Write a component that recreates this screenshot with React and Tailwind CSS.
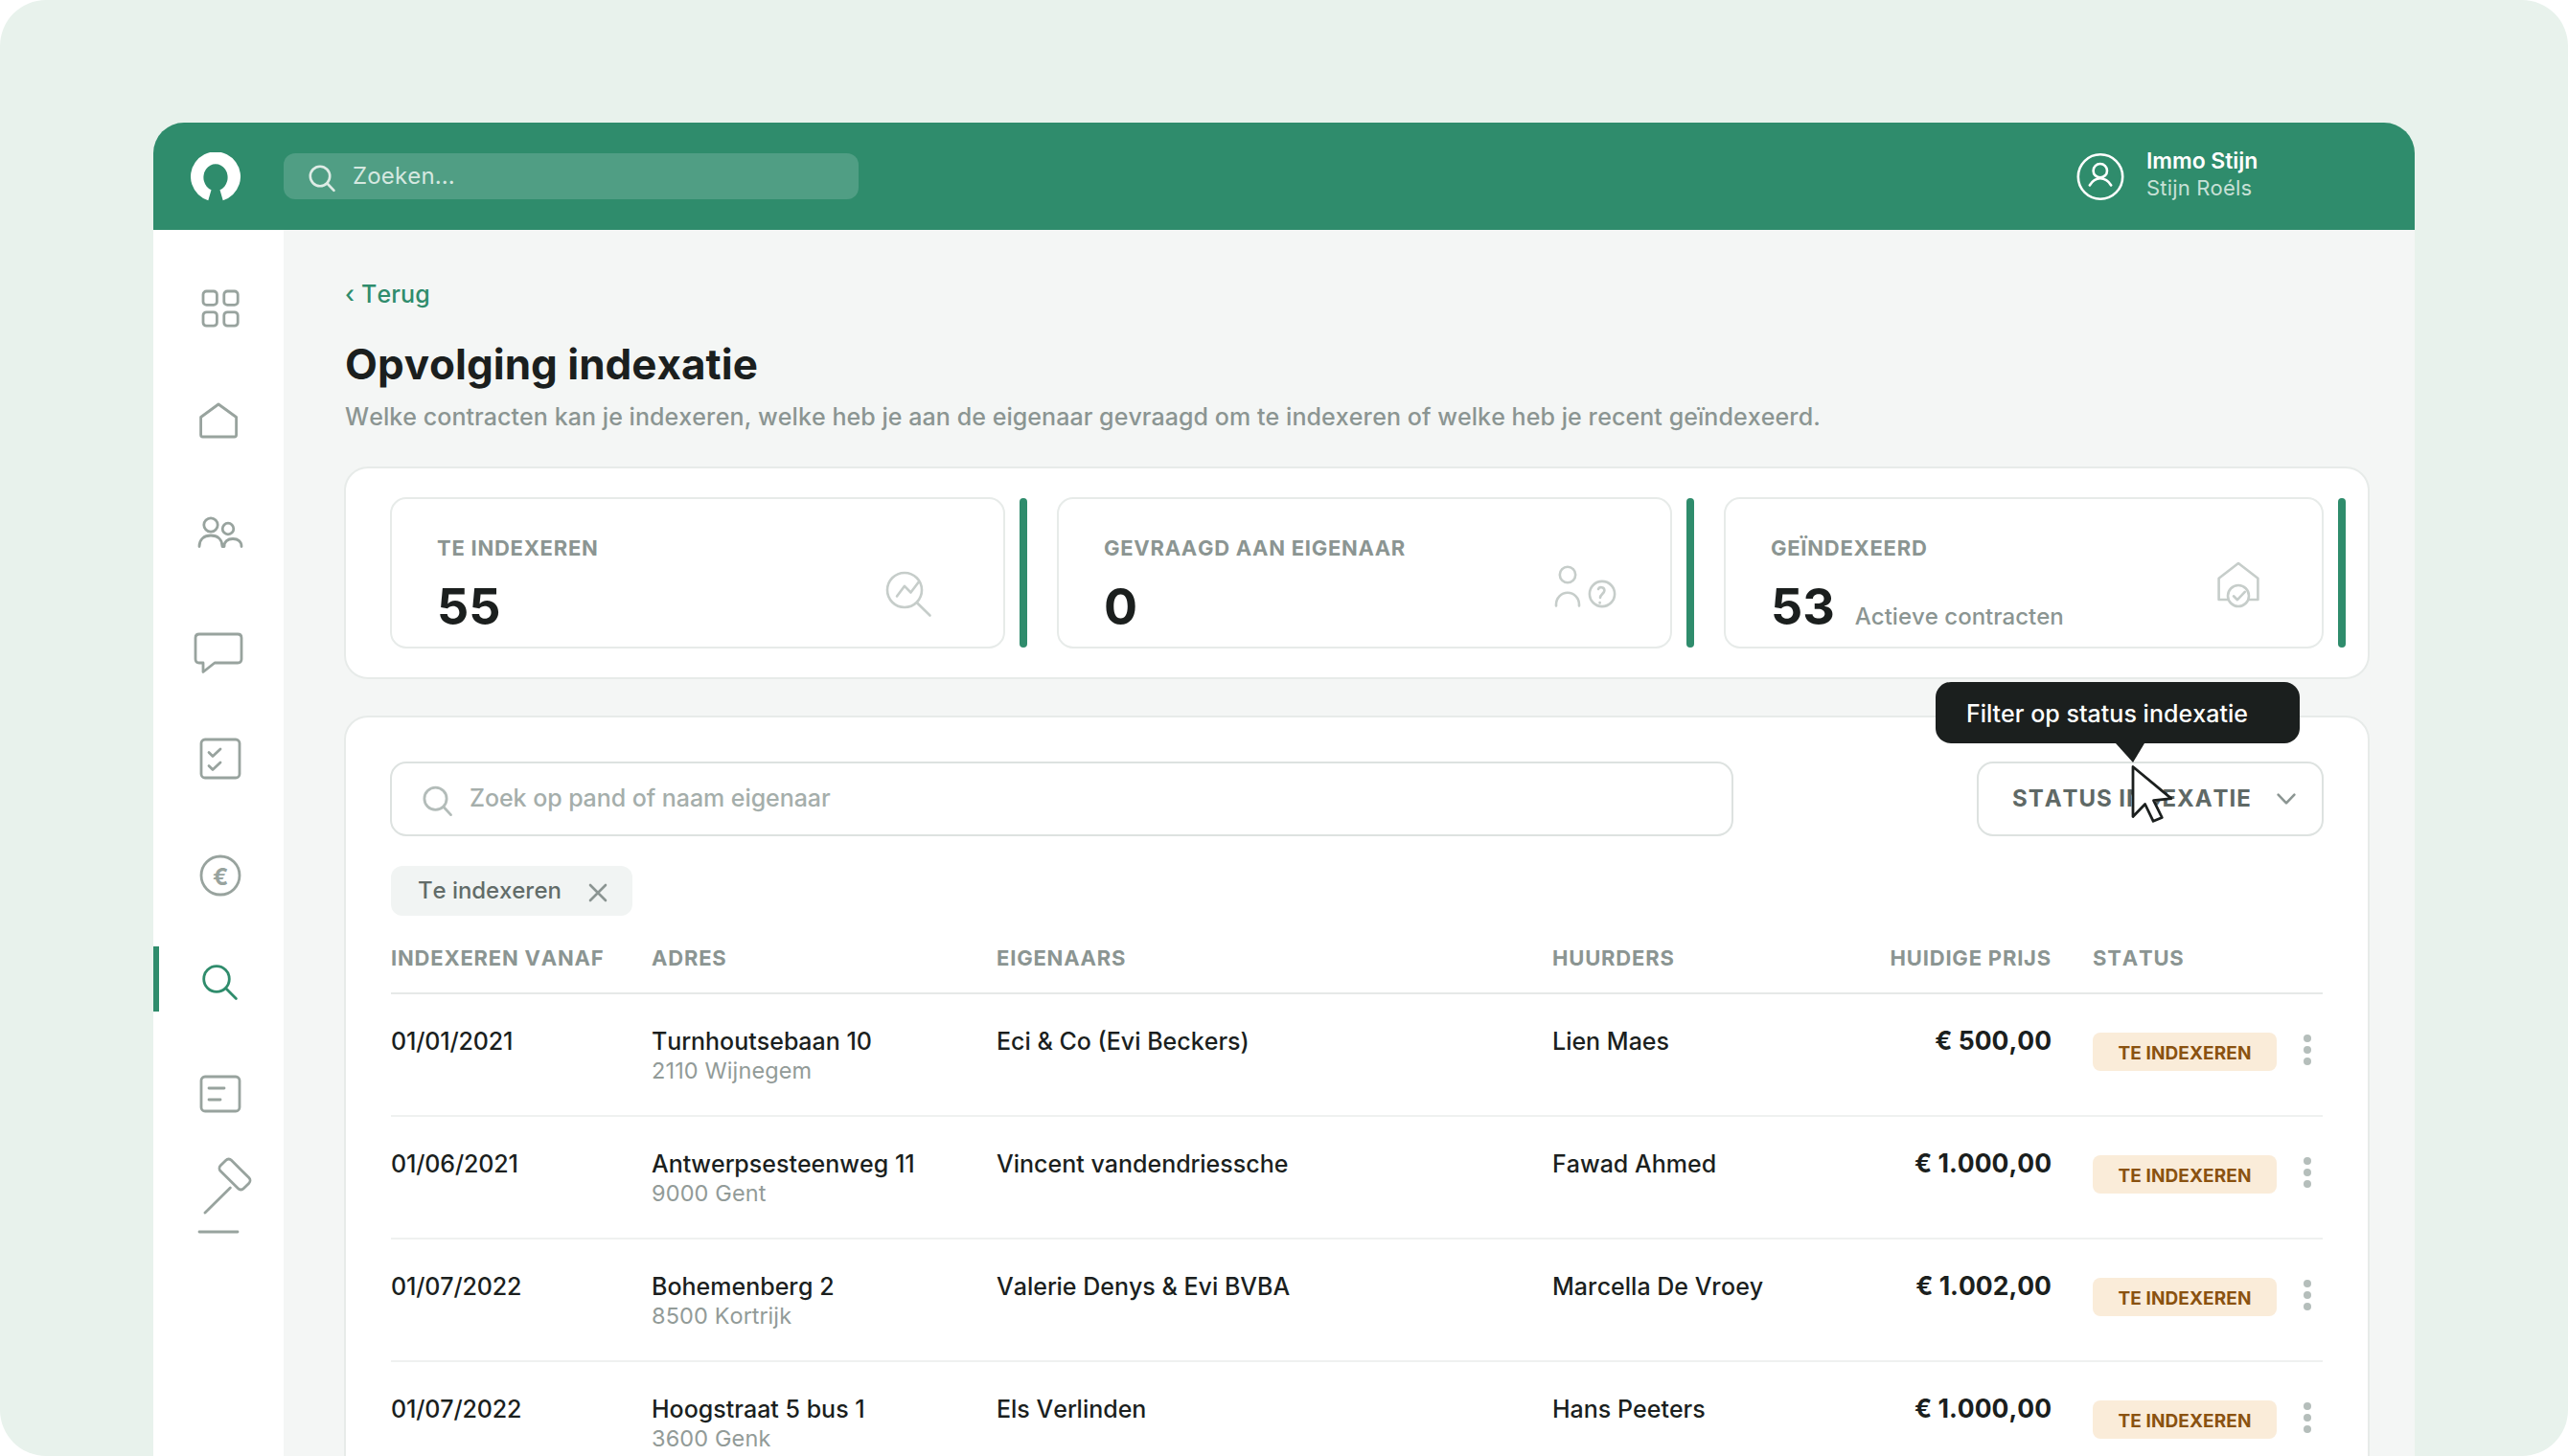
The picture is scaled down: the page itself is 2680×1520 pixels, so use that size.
const navItems = [
  { icon: <GridIcon />, space: 'mt-12' },
  { icon: <HouseIcon />, space: 'mt-12' },
  { icon: <UsersIcon />, space: 'mt-[52px]' },
  { icon: <ChatIcon />, space: 'mt-14' },
  { icon: <ChecklistIcon />, space: 'mt-[42px]' },
  { icon: <EuroIcon />, space: 'mt-[54px]' },
  { icon: <NavSearchIcon />, space: 'mt-10', active: true },
  { icon: <DocumentIcon />, space: 'mt-[52px]' },
  { icon: <GavelIcon />, space: 'mt-6' },
]

const stats = [
  { label: 'TE INDEXEREN', value: '55', width: 'w-[642px]', icon: <TrendSearchIcon /> },
  { label: 'GEVRAAGD AAN EIGENAAR', value: '0', width: 'w-[642px]', icon: <OwnerQuestionIcon /> },
  { label: 'GEÏNDEXEERD', value: '53', note: 'Actieve contracten', width: 'w-[626px]', icon: <HouseCheckIcon /> },
]

const contracts = [
  { date: '01/01/2021', street: 'Turnhoutsebaan 10', city: '2110 Wijnegem', owner: 'Eci & Co (Evi Beckers)', tenant: 'Lien Maes', price: '€ 500,00' },
  { date: '01/06/2021', street: 'Antwerpsesteenweg 11', city: '9000 Gent', owner: 'Vincent vandendriessche', tenant: 'Fawad Ahmed', price: '€ 1.000,00' },
  { date: '01/07/2022', street: 'Bohemenberg 2', city: '8500 Kortrijk', owner: 'Valerie Denys & Evi BVBA', tenant: 'Marcella De Vroey', price: '€ 1.002,00' },
  { date: '01/07/2022', street: 'Hoogstraat 5 bus 1', city: '3600 Genk', owner: 'Els Verlinden', tenant: 'Hans Peeters', price: '€ 1.000,00' },
]

function NavSvg({ height = 68, children }) {
  return (
    <svg width="136" height={height} viewBox={`0 0 136 ${height}`} fill="none" stroke="currentColor" strokeWidth="2.8" strokeLinecap="round" strokeLinejoin="round">
      {children}
    </svg>
  )
}

function GridIcon() {
  return (
    <NavSvg>
      <rect x="52" y="16" width="14.4" height="14.4" rx="3.5" />
      <rect x="73.8" y="16" width="14.4" height="14.4" rx="3.5" />
      <rect x="52" y="37.8" width="14.4" height="14.4" rx="3.5" />
      <rect x="73.8" y="37.8" width="14.4" height="14.4" rx="3.5" />
    </NavSvg>
  )
}

function HouseIcon() {
  return (
    <NavSvg>
      <path d="M68 18L86.6 31.5V50q0 2-2 2H51.6q-2 0-2-2V31.5Z" />
    </NavSvg>
  )
}

function UsersIcon() {
  return (
    <NavSvg>
      <circle cx="60" cy="24" r="7.2" />
      <circle cx="78" cy="28" r="5.8" />
      <path d="M48 46.5c0-7.5 5-11.5 12-11.5s12 4 12 11.5M74 46.5c0-5 3.5-8 9-8s9 3 9 8" />
    </NavSvg>
  )
}

function ChatIcon() {
  return (
    <NavSvg>
      <path d="M48 14H88q4 0 4 4V40q0 4-4 4H64L52 53.5V44H48q-4 0-4-4V18q0-4 4-4Z" />
    </NavSvg>
  )
}

function ChecklistIcon() {
  return (
    <NavSvg>
      <rect x="50" y="14" width="40" height="40" rx="4" />
      <path d="M58 27.5l4 4 8-7.5M58 41.5l4 4 8-7.5" />
    </NavSvg>
  )
}

function EuroIcon() {
  return (
    <NavSvg>
      <circle cx="70" cy="34" r="20" />
      <text x="70.3" y="43.5" textAnchor="middle" fill="currentColor" stroke="none" className="text-[24px] font-bold">€</text>
    </NavSvg>
  )
}

function NavSearchIcon() {
  return (
    <NavSvg>
      <circle cx="66" cy="34" r="13.3" />
      <path d="M75.7 43.7L86.4 54.4" />
    </NavSvg>
  )
}

function DocumentIcon() {
  return (
    <NavSvg>
      <rect x="50" y="16" width="40" height="36" rx="4" />
      <path d="M58 28H74M58 40H70" />
    </NavSvg>
  )
}

function GavelIcon() {
  return (
    <NavSvg height={92}>
      <rect x="-17" y="-8" width="34" height="16" rx="4" transform="translate(85 26) rotate(45)" />
      <path d="M80.3 40L54 66M48 86H88" />
    </NavSvg>
  )
}

function StatSvg({ className, width, height, children }) {
  return (
    <svg className={`absolute ${className}`} width={width} height={height} viewBox={`0 0 ${width} ${height}`} fill="none" stroke="#c6cdca" strokeWidth="2.6" strokeLinecap="round" strokeLinejoin="round">
      {children}
    </svg>
  )
}

function TrendSearchIcon() {
  return (
    <StatSvg className="right-[70px] top-[67px]" width={56} height={62}>
      <circle cx="23" cy="28" r="18" />
      <path d="M36 41.3L49.5 54.5M15 34.5L23 23.8 29.5 30.5 37.8 19.5" />
    </StatSvg>
  )
}

function OwnerQuestionIcon() {
  return (
    <StatSvg className="right-[50px] top-[67px]" width={76} height={62}>
      <circle cx="19" cy="12" r="8.2" />
      <path d="M7 44.5V43a12 12.3 0 0 1 24 0v1.5" />
      <circle cx="55" cy="32" r="13.1" />
      <path d="M51 27c1-3 6.6-2.2 6.4 1.6-.2 3-4.4 4-4.4 7.4M52.6 41v.4" />
    </StatSvg>
  )
}

function HouseCheckIcon() {
  return (
    <StatSvg className="right-[57px] top-[57px]" width={60} height={66}>
      <path d="M30 10L50.4 25.7V48H9.6V25.7Z" />
      <circle cx="30" cy="44" r="11" fill="#fff" />
      <path d="M25 44.3l4 3.9 7.8-8.3" />
    </StatSvg>
  )
}

function Header() {
  return (
    <header className="flex h-28 items-center rounded-t-[32px] bg-[#2f8c6c]">
      <svg className="ml-[39px] mt-0.5" width="52" height="52" viewBox="0 0 52 52" fill="#fff">
        <path d="M18.3 50.2A26 26 0 1 1 33.7 50.2L30.5 39.3A12.6 14 0 1 0 21.5 39.3Z" />
      </svg>
      <div className="ml-[45px] flex h-12 w-[600px] rounded-xl bg-[#509e84]">
        <svg className="ml-6" width="36" height="48" viewBox="0 0 36 48" fill="none" stroke="#dfece6" strokeWidth="2.6" strokeLinecap="round">
          <circle cx="14" cy="24" r="10.2" />
          <path d="M21.5 31.5L28.5 38.8" />
        </svg>
        <span className="ml-3 mt-[7px] text-[24px] leading-[33px] tracking-[0.15px] text-[#d5e8e0]">Zoeken...</span>
      </div>
      <svg className="ml-auto" width="52" height="52" viewBox="0 0 52 52" fill="none" stroke="#fff" strokeWidth="2.6" strokeLinecap="round">
        <circle cx="26" cy="26.5" r="23.2" />
        <circle cx="25.8" cy="20.2" r="7.2" />
        <path d="M14.8 35.5C17.5 31 21.5 28.3 25.8 28.3S34.5 31 37.2 35.5" />
      </svg>
      <div className="ml-[22px] mt-[26px] w-[280px] self-start">
        <div className="text-[23px] font-semibold leading-7 tracking-[-0.05px] text-white">Immo Stijn</div>
        <div className="text-[22px] leading-7 tracking-[0.18px] text-[#c7e0d6]">Stijn Roéls</div>
      </div>
    </header>
  )
}

function Sidebar() {
  return (
    <nav className="w-[136px] shrink-0 bg-white text-[#98a39e]">
      {navItems.map((item, i) => (
        <div key={i} className={`relative ${item.space} ${item.active ? 'text-[#2f8c6c]' : ''}`}>
          {item.active && <span className="absolute inset-y-0 left-0 w-1.5 bg-[#2f8c6c]" />}
          {item.icon}
        </div>
      ))}
    </nav>
  )
}

function Stats() {
  return (
    <div className="mt-9 flex h-[222px] gap-[31px] rounded-[25px] border-2 border-[#e7ebe9] bg-white pl-[46px] pt-[30px]">
      {stats.map((s) => (
        <div key={s.label} className="flex shrink-0">
          <div className={`relative h-[158px] rounded-[17px] border-2 border-[#e7ebe9] pl-[47px] pt-[37px] ${s.width}`}>
            <div className="text-[22px] font-bold leading-7 tracking-[0.74px] text-[#8b9592]">{s.label}</div>
            <div className="mt-4 flex items-baseline">
              <span className="text-[52px] font-bold leading-[63px] text-[#1b1f1e]">{s.value}</span>
              {s.note && <span className="ml-[21px] text-[24px] font-medium text-[#8b9592]">{s.note}</span>}
            </div>
            {s.icon}
          </div>
          <div className="ml-[15px] mt-px h-[156px] w-2 rounded bg-[#2f8c6c]" />
        </div>
      ))}
    </div>
  )
}

function SearchInput() {
  return (
    <div className="flex h-[78px] w-[1402px] rounded-[17px] border-2 border-[#dde2e0] pt-5">
      <svg className="ml-[27px]" width="42" height="40" viewBox="0 0 42 40" fill="none" stroke="#b3bcb9" strokeWidth="2.8" strokeLinecap="round">
        <circle cx="18.5" cy="16.8" r="11.6" />
        <path d="M27 25.5L34.5 33.6" />
      </svg>
      <span className="ml-3 text-[25px] font-medium leading-8 tracking-[-0.06px] text-[#a5aeab]">Zoek op pand of naam eigenaar</span>
    </div>
  )
}

function StatusFilter() {
  return (
    <div className="relative flex h-[78px] w-[362px] rounded-[17px] border-2 border-[#dde2e0] bg-white pl-[35px] pt-5">
      <span className="text-[24px] font-bold leading-[33px] tracking-[0.95px] text-[#5f6966]">STATUS INDEXATIE</span>
      <svg className="absolute right-[21px] top-6" width="30" height="24" viewBox="0 0 30 24" fill="none" stroke="#8b9592" strokeWidth="2.6" strokeLinecap="round" strokeLinejoin="round">
        <path d="M5.6 8.7L14 17.3 22.4 8.7" />
      </svg>
      <div className="absolute left-[-45px] top-[-85px] h-16 w-[380px] rounded-2xl bg-[#1b1f1e] pl-8 pt-[17px] text-[25px] font-medium leading-8 tracking-[0.04px] text-white">
        Filter op status indexatie
      </div>
      <svg className="absolute left-[135px] top-[-21px]" width="80" height="90" viewBox="0 0 80 90">
        <path d="M8 0L26 20L38 0Z" fill="#1b1f1e" />
        <path d="M26 24.5L66 57.6 47.5 59.7 56.3 77.5 47.2 81.3 38.6 63.5 26 76.5Z" fill="#fff" stroke="#1b1f1e" strokeWidth="2.8" strokeLinejoin="round" />
      </svg>
    </div>
  )
}

function ContractTable() {
  return (
    <div className="mx-px mt-[30px]">
      <div className="grid grid-cols-[272px_360px_580px_300px_220px_284px] border-b-2 border-[#e6e9e8] pb-[22px] text-[22px] font-bold leading-7 tracking-[0.8px] text-[#8b9592]">
        <div>INDEXEREN VANAF</div>
        <div>ADRES</div>
        <div>EIGENAARS</div>
        <div>HUURDERS</div>
        <div className="-mr-px text-right">HUIDIGE PRIJS</div>
        <div className="pl-11">STATUS</div>
      </div>
      {contracts.map((c, i) => (
        <div key={i} className="grid h-32 grid-cols-[272px_360px_580px_300px_220px_284px] border-b-2 border-[#eff1f0] pt-[33px] text-[25px] font-medium leading-8 text-[#1b1f1e]">
          <div className="tracking-[-0.15px]">{c.date}</div>
          <div>
            <div>{c.street}</div>
            <div className="text-[23.5px] font-normal leading-[29px] tracking-[0.12px] text-[#929b98]">{c.city}</div>
          </div>
          <div>{c.owner}</div>
          <div>{c.tenant}</div>
          <div className="-mr-px -mt-px text-right text-[26.5px] font-bold leading-[33px]">{c.price}</div>
          <div className="flex pl-11 pt-[7px]">
            <div className="h-10 w-48 rounded-lg bg-[#faecd9] pt-2.5 text-center text-[19px] font-bold leading-[23px] tracking-[0.1px] text-[#8a5210]">TE INDEXEREN</div>
            <div className="ml-7 mt-0.5 flex flex-col gap-1">
              <span className="size-2 rounded-full bg-[#b5bebb]" />
              <span className="size-2 rounded-full bg-[#b5bebb]" />
              <span className="size-2 rounded-full bg-[#b5bebb]" />
            </div>
          </div>
        </div>
      ))}
    </div>
  )
}

export default function App() {
  return (
    <div className="h-[1520px] w-[2680px] overflow-hidden bg-white font-['Inter',sans-serif] [font-kerning:none]">
      <div className="h-full overflow-hidden rounded-[48px] bg-[#e8f2ec] px-40 pt-32">
        <Header />
        <div className="flex h-[1280px] bg-[#f4f6f5]">
          <Sidebar />
          <main className="min-w-0 flex-1 pl-[63px] pr-[47px] pt-[51px]">
            <div className="pl-px">
              <a className="block text-[25px] font-medium leading-8 tracking-[0.15px] text-[#2f8c6c]">‹ Terug</a>
              <h1 className="mt-[29px] text-[44px] font-bold leading-[56px] text-[#1b1f1e]">Opvolging indexatie</h1>
              <p className="mt-[11px] text-[25px] font-medium leading-8 tracking-[0.06px] text-[#8b9592]">
                Welke contracten kan je indexeren, welke heb je aan de eigenaar gevraagd om te indexeren of welke heb je recent geïndexeerd.
              </p>
            </div>
            <Stats />
            <section className="mt-[38px] h-[900px] rounded-[25px] border-2 border-[#e7ebe9] bg-white px-[46px] pt-[46px]">
              <div className="flex justify-between">
                <SearchInput />
                <StatusFilter />
              </div>
              <div className="ml-px mt-[31px] flex h-[52px] w-[252px] rounded-xl bg-[#f1f4f3] pl-7 pt-[9px]">
                <span className="w-[149px] whitespace-nowrap text-[24px] font-medium leading-[33px] tracking-[-0.08px] text-[#626c69]">Te indexeren</span>
                <svg className="ml-[27px] mt-[7px] shrink-0" width="24" height="24" viewBox="0 0 24 24" fill="none" stroke="#8b9592" strokeWidth="2.6" strokeLinecap="round">
                  <path d="M4 4L20 20M20 4L4 20" />
                </svg>
              </div>
              <ContractTable />
            </section>
          </main>
        </div>
      </div>
    </div>
  )
}
